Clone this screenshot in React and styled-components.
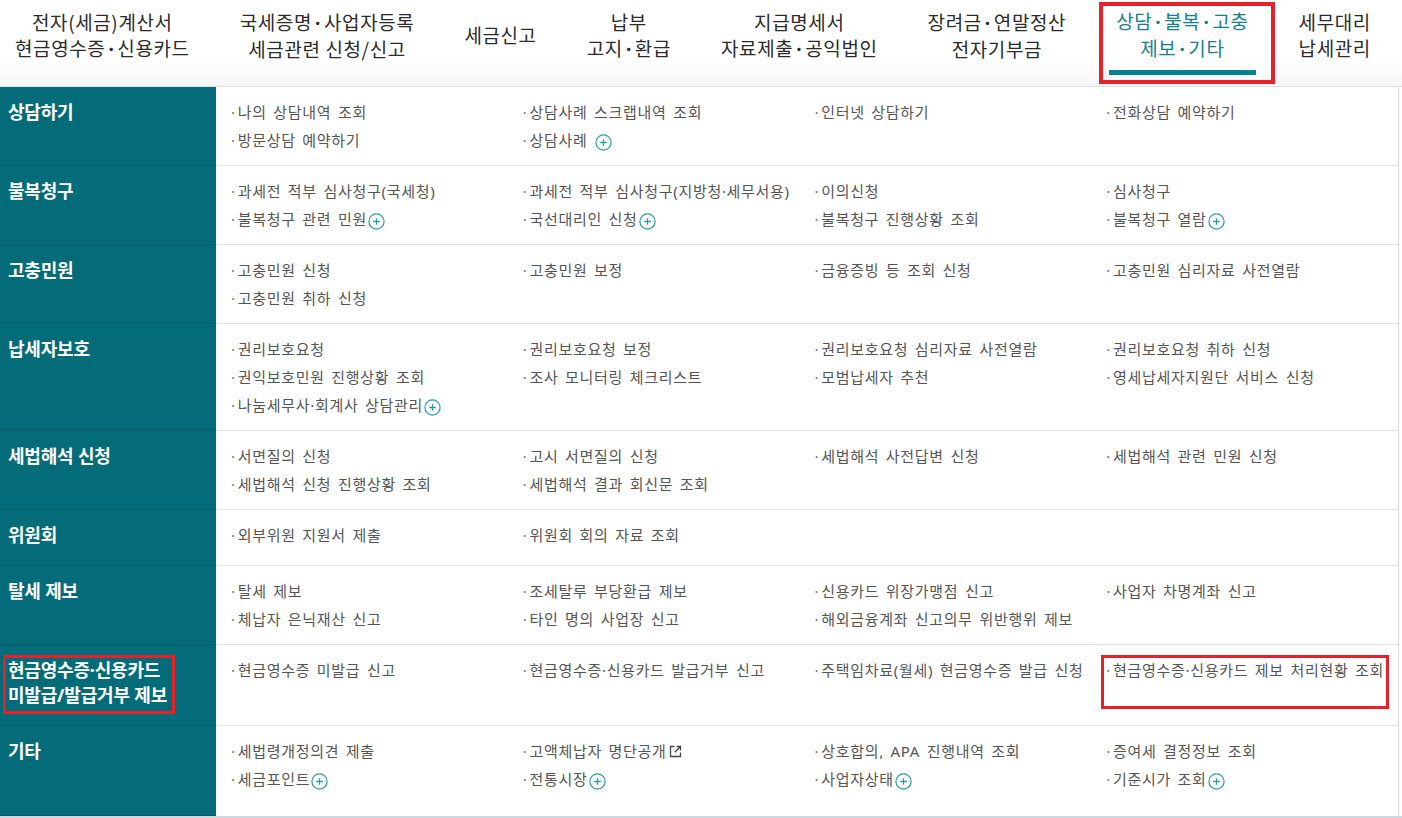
import * as React from 'react'
import styled, { createGlobalStyle } from 'styled-components'

const GlobalStyle = createGlobalStyle`
	html, body {
		margin: 0;
		padding: 0;
		background: #fff;
	}
	body {
		font-family: "Noto Sans CJK KR", "Noto Sans", sans-serif;
		color: #555;
	}
`

const TEAL = '#046c78'
const LATIN_FIRST = '"Noto Sans", "Noto Sans CJK KR", sans-serif'

const navItems = [
	{ lines: ['전자(세금)계산서', '현금영수증·신용카드'] },
	{ lines: ['국세증명·사업자등록', '세금관련 신청/신고'] },
	{ lines: ['세금신고'] },
	{ lines: ['납부', '고지·환급'] },
	{ lines: ['지급명세서', '자료제출·공익법인'] },
	{ lines: ['장려금·연말정산', '전자기부금'] },
	{ lines: ['상담·불복·고충', '제보·기타'], active: true },
	{ lines: ['세무대리', '납세관리'] }
]

const sections = [
	{
		title: ['상담하기'],
		items: [
			'나의 상담내역 조회',
			'상담사례 스크랩내역 조회',
			'인터넷 상담하기',
			'전화상담 예약하기',
			'방문상담 예약하기',
			{ text: '상담사례', plus: true, spaced: true }
		]
	},
	{
		title: ['불복청구'],
		items: [
			'과세전 적부 심사청구(국세청)',
			'과세전 적부 심사청구(지방청·세무서용)',
			'이의신청',
			'심사청구',
			{ text: '불복청구 관련 민원', plus: true },
			{ text: '국선대리인 신청', plus: true },
			'불복청구 진행상황 조회',
			{ text: '불복청구 열람', plus: true }
		]
	},
	{
		title: ['고충민원'],
		items: [
			'고충민원 신청',
			'고충민원 보정',
			'금융증빙 등 조회 신청',
			'고충민원 심리자료 사전열람',
			'고충민원 취하 신청'
		]
	},
	{
		title: ['납세자보호'],
		items: [
			'권리보호요청',
			'권리보호요청 보정',
			'권리보호요청 심리자료 사전열람',
			'권리보호요청 취하 신청',
			'권익보호민원 진행상황 조회',
			'조사 모니터링 체크리스트',
			'모범납세자 추천',
			'영세납세자지원단 서비스 신청',
			{ text: '나눔세무사·회계사 상담관리', plus: true }
		]
	},
	{
		title: ['세법해석 신청'],
		items: [
			'서면질의 신청',
			'고시 서면질의 신청',
			'세법해석 사전답변 신청',
			'세법해석 관련 민원 신청',
			'세법해석 신청 진행상황 조회',
			'세법해석 결과 회신문 조회'
		]
	},
	{
		title: ['위원회'],
		items: ['외부위원 지원서 제출', '위원회 회의 자료 조회']
	},
	{
		title: ['탈세 제보'],
		items: [
			'탈세 제보',
			'조세탈루 부당환급 제보',
			'신용카드 위장가맹점 신고',
			'사업자 차명계좌 신고',
			'체납자 은닉재산 신고',
			'타인 명의 사업장 신고',
			'해외금융계좌 신고의무 위반행위 제보'
		]
	},
	{
		title: ['현금영수증·신용카드', '미발급/발급거부 제보'],
		marked: true,
		items: [
			'현금영수증 미발급 신고',
			'현금영수증·신용카드 발급거부 신고',
			'주택임차료(월세) 현금영수증 발급 신청',
			{ text: '현금영수증·신용카드 제보 처리현황 조회', marked: true }
		]
	},
	{
		title: ['기타'],
		last: true,
		items: [
			'세법령개정의견 제출',
			{ text: '고액체납자 명단공개', ext: true },
			'상호합의, APA 진행내역 조회',
			'증여세 결정정보 조회',
			{ text: '세금포인트', plus: true },
			{ text: '전통시장', plus: true },
			{ text: '사업자상태', plus: true },
			{ text: '기준시가 조회', plus: true }
		]
	}
]

const Page = styled.div`
	width: 1402px;
	min-height: 818px;
	background: #fff;
	overflow: hidden;
`

const Header = styled.header`
	height: 87px;
	display: flex;
	align-items: flex-start;
	gap: 50px;
	padding: 9px 0 0 15px;
	box-sizing: border-box;
	background: linear-gradient(#fff 0, #fff 70%, #f6f6f6 100%);
	border-bottom: 1px solid #dedede;
`

const NavItem = styled.div`
	position: relative;
	display: flex;
	flex-direction: column;

	${({ $active }) =>
		$active &&
		`
		&::after {
			content: '';
			position: absolute;
			top: -7px;
			bottom: -9px;
			left: -17px;
			right: -26px;
			border: 4px solid #e8202a;
			pointer-events: none;
		}
	`}
`

const NavLabel = styled.div`
	height: 52px;
	display: flex;
	flex-direction: column;
	justify-content: center;
	align-items: center;
	text-align: center;
	font-size: 19px;
	line-height: 26px;
	letter-spacing: 0.6px;
	white-space: nowrap;
	color: ${({ $active }) => ($active ? '#16808b' : '#2b2b2b')};
`

const NavDot = styled.span`
	font-family: "Noto Sans", sans-serif;
	font-weight: 700;
	margin: 0 3px;
`

const NavBar = styled.div`
	height: 5px;
	margin: 9px -7px 0;
	background: #03838f;
`

const Panel = styled.div`
	width: 1399px;
	border-right: 1px solid #dcdcdc;
	box-sizing: border-box;
`

const Row = styled.div`
	display: grid;
	grid-template-columns: 216px 1fr;
`

const Title = styled.div`
	background: ${TEAL};
	border-bottom: 1px solid #035a64;
	padding: 13px 8px 17px;
	color: #fff;
	font-family: ${LATIN_FIRST};
	font-size: 18px;
	font-weight: 700;
	line-height: 25px;
	letter-spacing: -0.2px;
`

const TitleText = styled.span`
	position: relative;
	display: inline-block;
	vertical-align: top;

	${({ $marked }) =>
		$marked &&
		`
		&::after {
			content: '';
			position: absolute;
			top: -3px;
			bottom: -6px;
			left: -5px;
			right: -8px;
			border: 3px solid #e8202a;
			pointer-events: none;
		}
	`}
`

const Items = styled.ul`
	margin: 0;
	list-style: none;
	display: grid;
	grid-template-columns: repeat(4, 1fr);
	grid-auto-rows: 28px;
	align-content: start;
	padding: 11px 0 ${({ $last }) => ($last ? '22px' : '11px')} 15px;
	border-bottom: 1px solid ${({ $last }) => ($last ? 'transparent' : '#e2e2e2')};
`

const Item = styled.li`
	position: relative;
	display: flex;
	align-items: center;
	font-family: ${LATIN_FIRST};
	font-size: 15px;
	line-height: 28px;
	letter-spacing: 0.7px;
	word-spacing: 2px;
	color: #555;
	white-space: nowrap;

	&::before {
		content: '·';
		margin-right: 2px;
		color: #777;
	}

	${({ $marked }) =>
		$marked &&
		`
		&::after {
			content: '';
			position: absolute;
			top: -1px;
			bottom: -25px;
			left: -5px;
			right: 9px;
			border: 3px solid #e8202a;
			pointer-events: none;
		}
	`}
`

const PlusIcon = styled.svg`
	width: 17px;
	height: 17px;
	margin-left: ${({ $spaced }) => ($spaced ? '7px' : '1px')};
	margin-top: 4px;
	flex: none;
`

const ExtIcon = styled.svg`
	width: 13px;
	height: 13px;
	margin-left: 2px;
	margin-top: 1px;
	flex: none;
`

const BottomStrip = styled.div`
	height: 6px;
	background: linear-gradient(#d3d9e0, #c3cbd4);
`

const Plus = ({ spaced }) => (
	<PlusIcon viewBox="0 0 17 17" $spaced={spaced}>
		<circle cx="8.5" cy="8.5" r="7.6" fill="none" stroke="#2f9aa3" strokeWidth="1.2" />
		<path d="M8.5 5.2v6.6M5.2 8.5h6.6" stroke="#2f9aa3" strokeWidth="1.3" />
	</PlusIcon>
)

const External = () => (
	<ExtIcon viewBox="0 0 13 13">
		<path d="M5.5 1.5H1.5v10h10V7.5" fill="none" stroke="#444" strokeWidth="1.3" />
		<path d="M7.5 1.5h4v4M11.5 1.5L5.8 7.2" fill="none" stroke="#444" strokeWidth="1.3" />
	</ExtIcon>
)

const NavLine = ({ text }) => (
	<span>
		{text.split('·').map((part, i) => (
			<React.Fragment key={i}>
				{i > 0 && <NavDot>·</NavDot>}
				{part}
			</React.Fragment>
		))}
	</span>
)

const MenuItem = ({ item }) => {
	const data = typeof item === 'string' ? { text: item } : item
	return (
		<Item $marked={data.marked}>
			{data.text}
			{data.plus && <Plus spaced={data.spaced} />}
			{data.ext && <External />}
		</Item>
	)
}

const App = () => {
	return (
		<Page>
			<GlobalStyle />
			<Header>
				{navItems.map(nav => (
					<NavItem key={nav.lines[0]} $active={nav.active}>
						<NavLabel $active={nav.active}>
							{nav.lines.map(line => (
								<NavLine key={line} text={line} />
							))}
						</NavLabel>
						{nav.active && <NavBar />}
					</NavItem>
				))}
			</Header>
			<Panel>
				{sections.map(section => (
					<Row key={section.title[0]}>
						<Title>
							<TitleText $marked={section.marked}>
								{section.title.map((line, i) => (
									<React.Fragment key={line}>
										{i > 0 && <br />}
										{line}
									</React.Fragment>
								))}
							</TitleText>
						</Title>
						<Items $last={section.last}>
							{section.items.map((item, i) => (
								<MenuItem key={i} item={item} />
							))}
						</Items>
					</Row>
				))}
			</Panel>
			<BottomStrip />
		</Page>
	)
}

export default App
